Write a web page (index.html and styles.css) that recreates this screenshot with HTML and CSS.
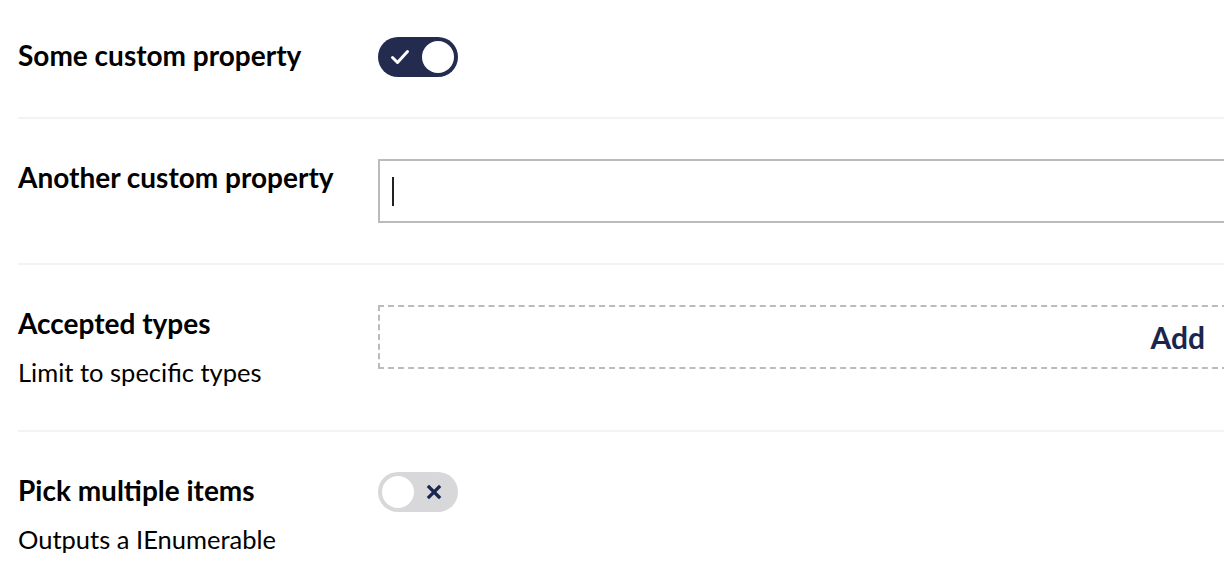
FILE: index.html
```html
<!DOCTYPE html>
<html lang="en">
<head>
<meta charset="utf-8">
<title>Properties</title>
<link rel="stylesheet" href="styles.css">
</head>
<body>
<div class="props">
  <div class="row first">
    <div class="label-col">
      <div class="label">Some custom property</div>
    </div>
    <div class="control-col">
      <div class="toggle on">
        <svg class="t-icon" width="20" height="18" viewBox="0 0 20 18"><path d="M2.5 9.5 L7.5 14.5 L17.5 3.5" fill="none" stroke="#fff" stroke-width="3" stroke-linecap="round" stroke-linejoin="round"/></svg>
        <span class="knob"></span>
      </div>
    </div>
  </div>
  <div class="row">
    <div class="label-col">
      <div class="label">Another custom property</div>
    </div>
    <div class="control-col">
      <div class="text-input"><span class="caret"></span></div>
    </div>
  </div>
  <div class="row">
    <div class="label-col">
      <div class="label">Accepted types</div>
      <div class="desc">Limit to specific types</div>
    </div>
    <div class="control-col">
      <div class="add-box"><span class="add-btn">Add</span></div>
    </div>
  </div>
  <div class="row last">
    <div class="label-col">
      <div class="label">Pick multiple items</div>
      <div class="desc">Outputs a IEnumerable</div>
    </div>
    <div class="control-col">
      <div class="toggle off">
        <span class="knob"></span>
        <svg class="t-icon" width="16" height="16" viewBox="0 0 16 16"><path d="M3 3 L13 13 M13 3 L3 13" fill="none" stroke="#1b264f" stroke-width="3.2" stroke-linecap="square"/></svg>
      </div>
    </div>
  </div>
</div>
</body>
</html>
```
FILE: styles.css
```css
html, body {
  margin: 0;
  padding: 0;
  overflow: hidden;
  background: #fff;
}
body {
  font-family: Lato, "Open Sans", sans-serif;
  color: #000;
}
.props {
  margin-left: 18px;
  width: 1240px;
}
.row {
  display: grid;
  grid-template-columns: 360px 860px;
  align-items: start;
  padding: 40px 0;
  border-bottom: 2px solid #f3f3f5;
}
.row.first {
  padding-top: 37px;
}
.row.last {
  border-bottom: none;
}
.label {
  font-size: 28px;
  font-weight: 700;
  line-height: 36px;
}
.desc {
  font-size: 25.5px;
  font-weight: 400;
  line-height: 36px;
  margin-top: 13px;
}
.toggle {
  width: 80px;
  height: 40px;
  border-radius: 20px;
  box-sizing: border-box;
  display: flex;
  align-items: center;
  justify-content: space-between;
}
.toggle.on {
  background: #232b4f;
  padding: 0 4px 0 12px;
}
.toggle.off {
  background: #d8d7d9;
  padding: 0 16px 0 4px;
}
.knob {
  width: 32px;
  height: 32px;
  border-radius: 50%;
  background: #fff;
}
.t-icon {
  display: block;
}
.text-input {
  height: 64px;
  box-sizing: border-box;
  border: 2px solid #bbbabf;
  display: flex;
  align-items: center;
  padding-left: 12px;
}
.caret {
  width: 2px;
  height: 29px;
  background: #222;
}
.add-box {
  height: 64px;
  box-sizing: border-box;
  border: 2px dashed #bbbabf;
  display: flex;
  align-items: center;
  justify-content: flex-end;
  padding-right: 31px;
}
.add-btn {
  font-size: 30px;
  font-weight: 700;
  color: #1b264f;
}
```
